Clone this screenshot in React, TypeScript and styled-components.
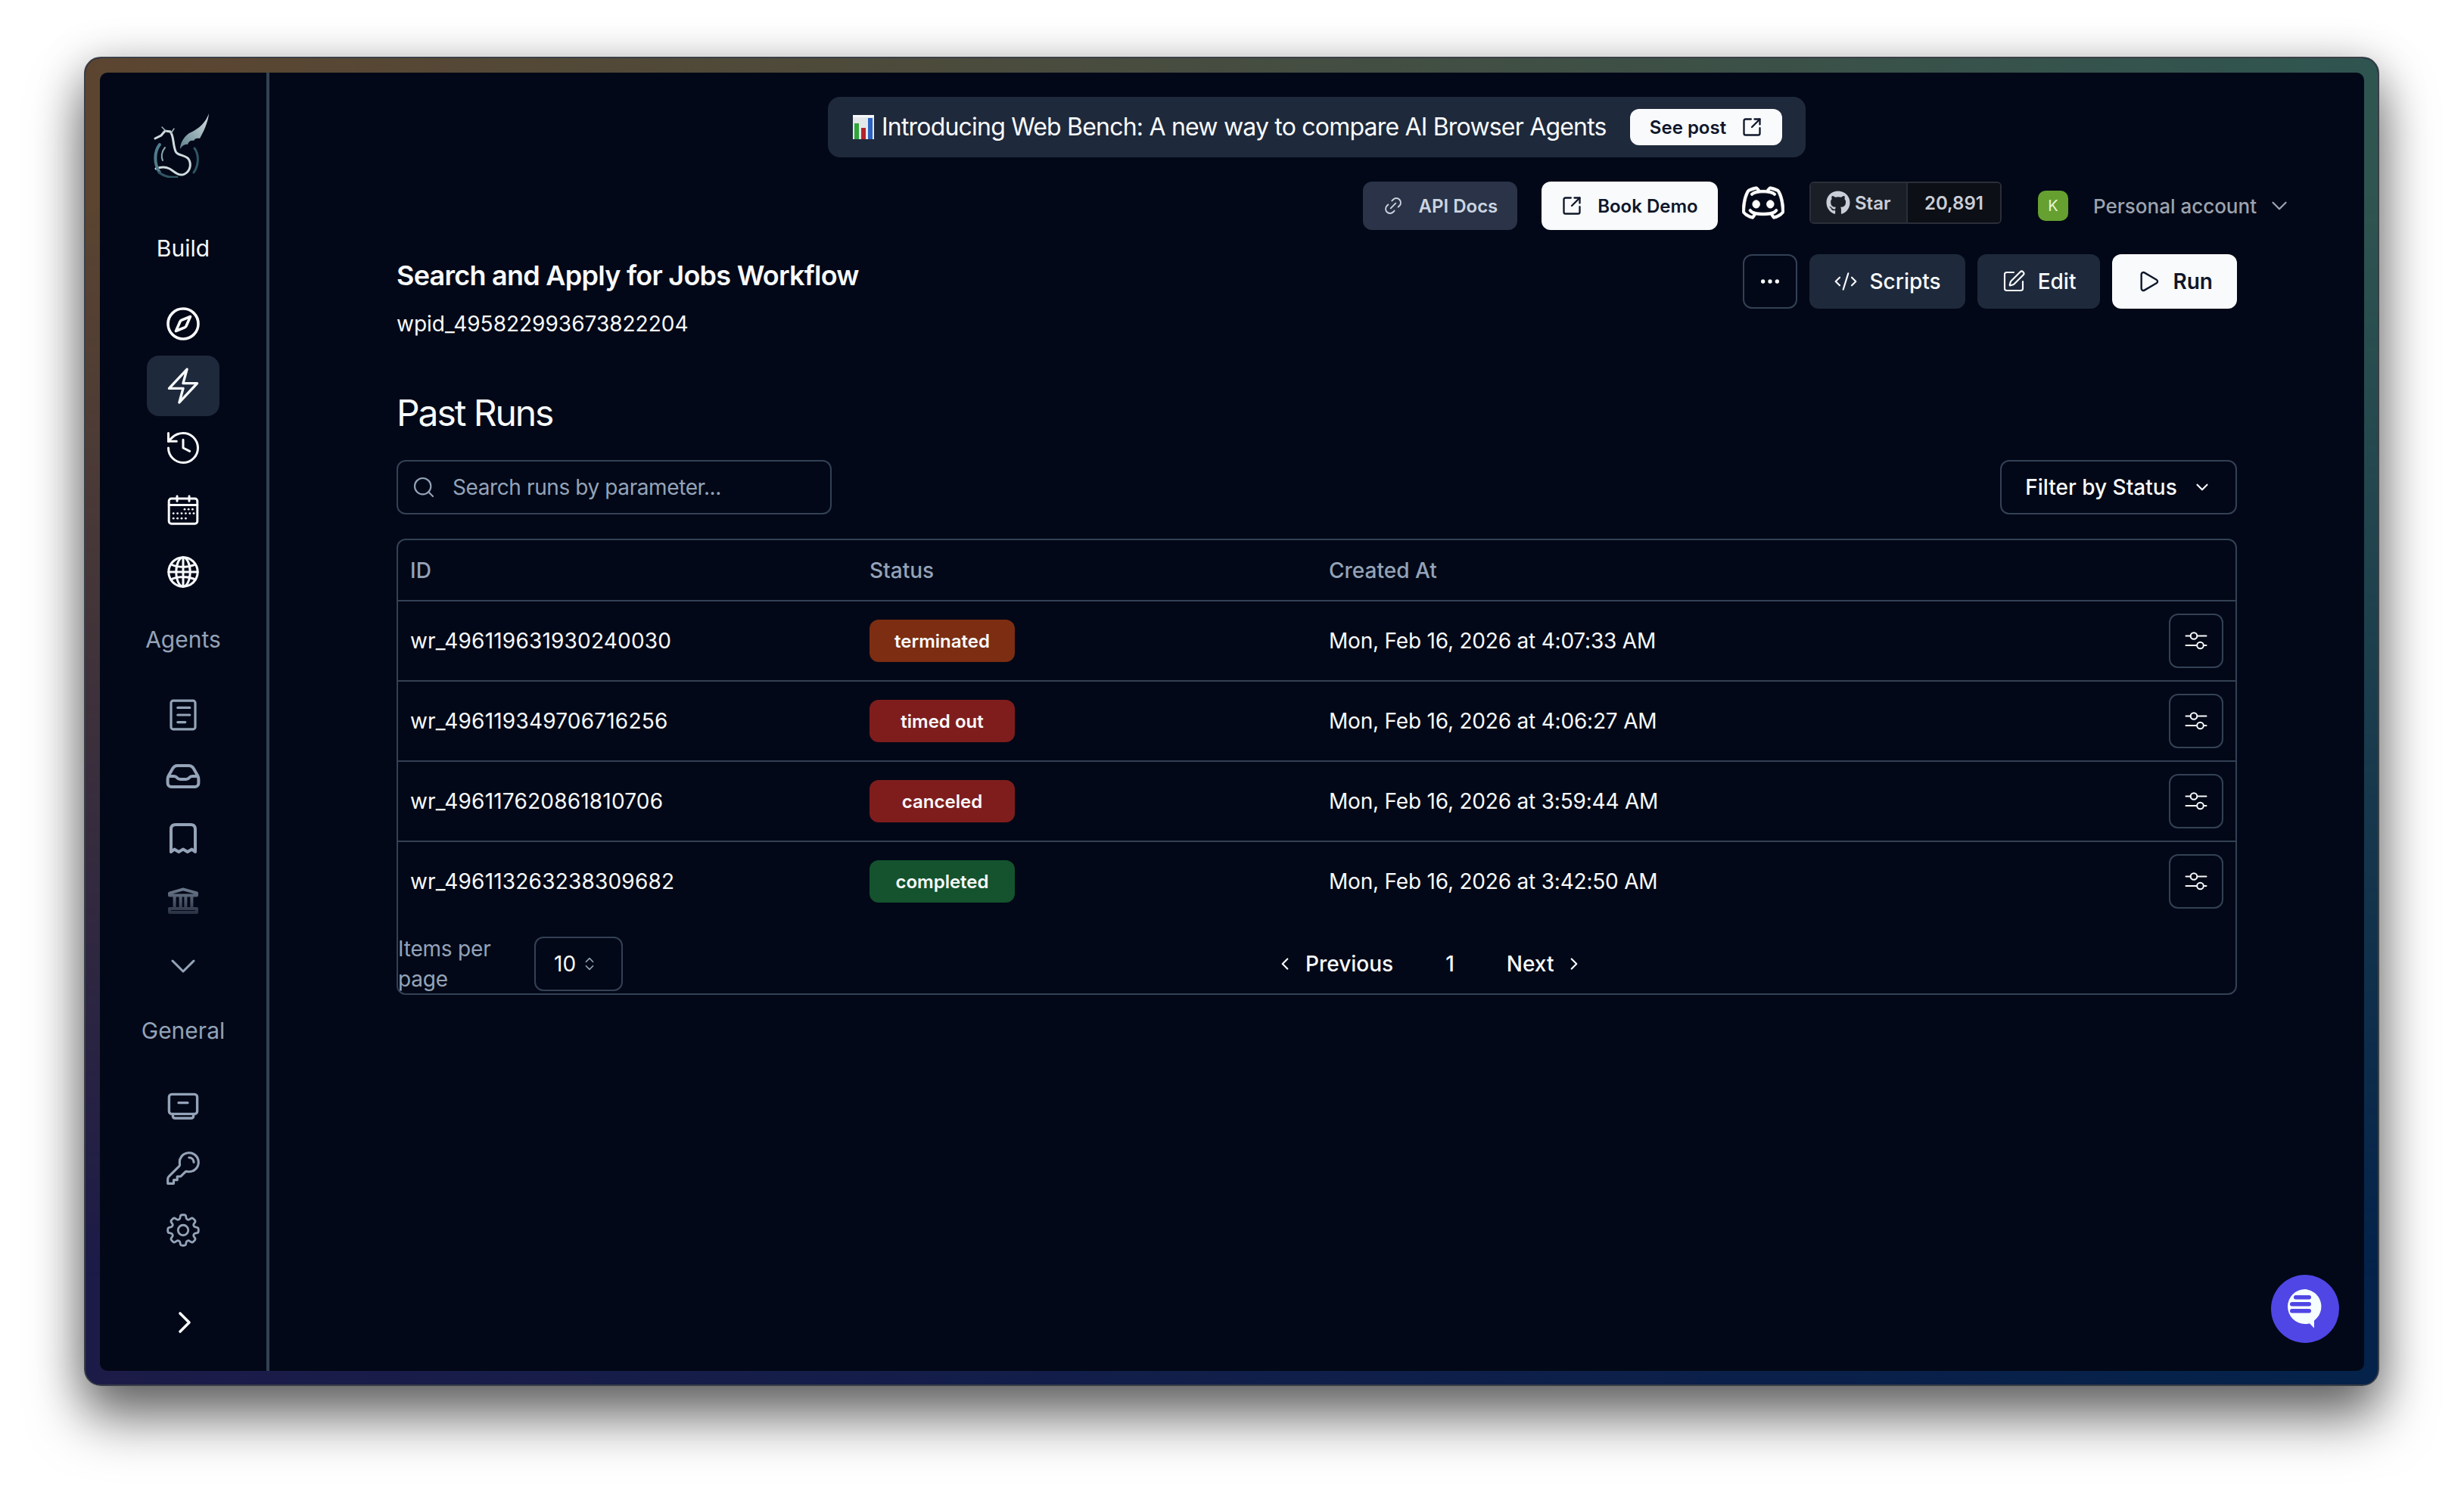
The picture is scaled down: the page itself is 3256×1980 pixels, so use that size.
import React from "react";
import styled, { createGlobalStyle } from "styled-components";
import {
  ChevronDown, ChevronLeft, ChevronRight, ChevronsUpDown, CodeXml, Ellipsis, History, Link2,
  Play, Search, SquareArrowOutUpRight, SquarePen,
} from "lucide-react";
import { HiOutlineBolt, HiOutlineKey, HiOutlineCog8Tooth } from "react-icons/hi2";
import { RxDiscordLogo } from "react-icons/rx";
import { FaGithub } from "react-icons/fa";

const GlobalStyle = createGlobalStyle`
  html, body { margin: 0; padding: 0; background: #ffffff; }
  * { box-sizing: border-box; }
  body { font-family: Inter, "Liberation Sans", sans-serif; -webkit-font-smoothing: antialiased; }
`;

const Page = styled.div`
  width: 3256px;
  height: 1980px;
  padding: 75px 112px 148px 111px;
  background: #fff;
`;

const Frame = styled.div`
  position: relative;
  height: 100%;
  padding: 19px 18px 18px 19px;
  border: 2px solid #3a3f47;
  border-radius: 22px;
  background: linear-gradient(to right, #1c1b48, #04224a);
  box-shadow: 0 44px 70px rgba(0, 0, 0, 0.5), 0 10px 60px rgba(0, 0, 0, 0.28);
  &::before {
    content: "";
    position: absolute;
    inset: 0;
    border-radius: 20px;
    background: linear-gradient(to right, #5c4530, #2f5550);
    -webkit-mask-image: linear-gradient(to bottom, #000 10%, transparent 92%);
    mask-image: linear-gradient(to bottom, #000 10%, transparent 92%);
  }
`;

const Window = styled.div`
  position: relative;
  display: flex;
  height: 100%;
  border-radius: 10px;
  background: #020817;
  color: #f8fafc;
  overflow: hidden;
`;

const Sidebar = styled.aside`
  flex: 0 0 224px;
  display: flex;
  flex-direction: column;
  align-items: center;
  border-right: 4px solid #334155;
`;

const LogoBox = styled.div`
  width: 80px;
  height: 85px;
  margin-top: 54px;
  display: flex;
  justify-content: center;
`;

const NavLabel = styled.div<{ $first?: boolean; $muted?: boolean }>`
  font-size: 30px;
  line-height: 48px;
  margin-top: ${(p) => (p.$first ? "69px" : "25px")};
  margin-bottom: 36px;
  color: ${(p) => (p.$muted ? "#94a3b8" : "#f8fafc")};
`;

const NavList = styled.nav`
  display: flex;
  flex-direction: column;
  gap: 2px;
`;

const NavItem = styled.div<{ $active?: boolean; $muted?: boolean; $fade?: boolean }>`
  width: 96px;
  height: 80px;
  display: flex;
  align-items: center;
  justify-content: center;
  border-radius: 16px;
  background: ${(p) => (p.$active ? "#1e293b" : "transparent")};
  color: ${(p) => (p.$muted ? "#94a3b8" : "#f8fafc")};
  ${(p) =>
    p.$fade
      ? `-webkit-mask-image: linear-gradient(to bottom, rgba(0,0,0,.72) 30%, rgba(0,0,0,.28) 70%);
         mask-image: linear-gradient(to bottom, rgba(0,0,0,.72) 30%, rgba(0,0,0,.28) 70%);`
      : ""}
`;

const NavMore = styled(NavItem)`
  padding-top: 8px;
`;

const CollapseToggle = styled.div`
  margin-top: auto;
  margin-bottom: 40px;
  height: 48px;
  width: 52px;
  display: flex;
  align-items: center;
  justify-content: center;
  padding-left: 4px;
  color: #f8fafc;
`;

const Main = styled.main`
  flex: 1;
  min-width: 0;
  display: flex;
  flex-direction: column;
`;

const Banner = styled.div`
  align-self: center;
  width: 1292px;
  height: 80px;
  margin-top: 32px;
  padding: 0 31px 0 33px;
  display: flex;
  align-items: center;
  justify-content: space-between;
  border-radius: 16px;
  background: #1e293b;
`;

const BannerText = styled.div`
  display: flex;
  align-items: center;
  gap: 10px;
  font-size: 32px;
  line-height: 48px;
  letter-spacing: -0.8px;
  white-space: nowrap;
  color: #f8fafc;
`;

const TopBar = styled.div`
  display: flex;
  align-items: flex-start;
  justify-content: flex-end;
  height: 64px;
  margin-top: 32px;
  padding-right: 95px;
`;

const PillButton = styled.div<{ $light?: boolean; $width: number }>`
  width: ${(p) => p.$width}px;
  height: 64px;
  display: flex;
  align-items: center;
  justify-content: center;
  gap: 20px;
  border-radius: 12px;
  font-size: 24px;
  font-weight: 600;
  white-space: nowrap;
  background: ${(p) => (p.$light ? "#f8fafc" : "#2a3347")};
  color: ${(p) => (p.$light ? "#0f172a" : "#cbd5e1")};
  & + & { margin-left: 32px; }
`;

const SeePost = styled.div`
  width: 201px;
  height: 48px;
  display: flex;
  align-items: center;
  justify-content: center;
  gap: 20px;
  border-radius: 12px;
  background: #f8fafc;
  color: #0f172a;
  font-size: 24px;
  font-weight: 600;
  white-space: nowrap;
`;

const DiscordLink = styled.div`
  margin: 0 33px 0 32px;
  height: 56px;
  width: 56px;
  display: flex;
  align-items: center;
  justify-content: center;
  color: #fff;
  svg path { stroke: currentColor; stroke-width: 0.2px; }
`;

const StarGroup = styled.div`
  display: flex;
  height: 56px;
  border: 2px solid #2a2e38;
  border-radius: 6px;
  color: #c9ced8;
  font-size: 24px;
  font-weight: 600;
`;

const StarLeft = styled.div`
  display: flex;
  align-items: center;
  gap: 6px;
  width: 128px;
  padding-left: 20px;
  background: #1a1e26;
  border-right: 2px solid #2a2e38;
  border-radius: 4px 0 0 4px;
`;

const StarCount = styled.div`
  width: 122px;
  display: flex;
  align-items: center;
  justify-content: center;
  background: #0c0f15;
  border-radius: 0 4px 4px 0;
`;

const Account = styled.div`
  display: flex;
  align-items: center;
  height: 64px;
  margin-left: 48px;
  color: #9ca3af;
  font-size: 26px;
  font-weight: 500;
  white-space: nowrap;
`;

const Avatar = styled.div`
  width: 40px;
  height: 40px;
  display: flex;
  align-items: center;
  justify-content: center;
  border-radius: 10px;
  background: #65a030;
  color: #e8f5d8;
  font-size: 20px;
  font-weight: 400;
  margin-right: 33px;
`;

const AccountChevron = styled(ChevronDown)`
  margin-left: 13px;
`;

const Content = styled.div`
  margin-top: 32px;
  padding: 0 168px;
`;

const HeaderRow = styled.div`
  display: flex;
  justify-content: space-between;
  align-items: flex-start;
`;

const Title = styled.h1`
  margin: 0;
  font-size: 36px;
  line-height: 56px;
  font-weight: 600;
  letter-spacing: -0.75px;
`;

const WorkflowId = styled.div`
  margin-top: 16px;
  font-size: 28px;
  line-height: 40px;
`;

const Actions = styled.div`
  display: flex;
  gap: 16px;
`;

const ActionButton = styled.div<{ $variant?: "ghost" | "solid" | "light" }>`
  height: 72px;
  display: flex;
  align-items: center;
  justify-content: center;
  gap: 16px;
  padding: ${(p) => (p.$variant === "ghost" ? "0" : "0 32px")};
  width: ${(p) => (p.$variant === "ghost" ? "72px" : "auto")};
  border-radius: 12px;
  font-size: 28px;
  border: ${(p) => (p.$variant === "ghost" ? "2px solid #334155" : "none")};
  background: ${(p) => (p.$variant === "light" ? "#f8fafc" : p.$variant === "solid" ? "#1e293b" : "transparent")};
  color: ${(p) => (p.$variant === "light" ? "#0f172a" : "#f8fafc")};
  font-weight: ${(p) => (p.$variant === "light" ? 600 : 500)};
`;

const SectionTitle = styled.h2`
  margin: 66px 0 0;
  font-size: 48px;
  line-height: 64px;
  font-weight: 400;
  letter-spacing: -2.1px;
`;

const FilterRow = styled.div`
  margin-top: 30px;
  display: flex;
  justify-content: space-between;
`;

const SearchBox = styled.div`
  width: 575px;
  height: 72px;
  display: flex;
  align-items: center;
  gap: 22px;
  padding-left: 18px;
  border: 2px solid #334155;
  border-radius: 12px;
  color: #94a3b8;
  font-size: 28px;
  letter-spacing: -0.4px;
`;

const FilterButton = styled.div`
  width: 313px;
  height: 72px;
  display: flex;
  align-items: center;
  justify-content: center;
  gap: 20px;
  border: 2px solid #334155;
  border-radius: 12px;
  font-size: 28px;
  font-weight: 500;
`;

const Table = styled.div`
  margin-top: 32px;
  border: 2px solid #334155;
  border-radius: 12px;
`;

const Columns = `
  display: grid;
  grid-template-columns: 607px 607px 1fr 88px;
  align-items: center;
`;

const HeaderCells = styled.div`
  ${Columns}
  height: 81px;
  border-bottom: 2px solid #334155;
  color: #94a3b8;
  font-size: 28px;
  font-weight: 500;
`;

const Row = styled.div<{ $last?: boolean }>`
  ${Columns}
  height: ${(p) => (p.$last ? "104px" : "106px")};
  border-bottom: ${(p) => (p.$last ? "none" : "2px solid #334155")};
  font-size: 28px;
`;

const Cell = styled.div`
  padding-left: 16px;
  white-space: nowrap;
`;

const RunId = styled(Cell)`
  letter-spacing: 0.2px;
`;

const CreatedCell = styled(Cell)`
  letter-spacing: -0.2px;
`;

const Badge = styled.div<{ $color: string }>`
  width: 192px;
  height: 56px;
  display: flex;
  align-items: center;
  justify-content: center;
  border-radius: 12px;
  background: ${(p) => p.$color};
  color: #f8fafc;
  font-size: 24px;
  font-weight: 600;
`;

const IconButton = styled.div`
  width: 72px;
  height: 72px;
  display: flex;
  align-items: center;
  justify-content: center;
  border: 2px solid #334155;
  border-radius: 12px;
`;

const Footer = styled.div`
  height: 96px;
  padding-top: 18px;
  display: flex;
  align-items: center;
`;

const PerPageLabel = styled.div`
  width: 160px;
  font-size: 28px;
  line-height: 40px;
  letter-spacing: -0.2px;
  color: #94a3b8;
`;

const PageSelect = styled.div`
  width: 117px;
  height: 72px;
  margin-left: 20px;
  display: flex;
  align-items: center;
  gap: 7px;
  padding-left: 24px;
  border: 2px solid #334155;
  border-radius: 12px;
  font-size: 28px;
  color: #f8fafc;
  svg { color: #94a3b8; }
`;

const Pagination = styled.div`
  margin-left: 862px;
  display: flex;
  align-items: center;
  font-size: 28px;
  font-weight: 500;
`;

const PageLink = styled.div`
  display: flex;
  align-items: center;
  gap: 14px;
`;

const PageNumber = styled.div`
  margin: 0 69px;
`;

const ChatBubble = styled.div`
  position: absolute;
  right: 33px;
  bottom: 37px;
  width: 90px;
  height: 90px;
  display: flex;
  align-items: center;
  justify-content: center;
  border-radius: 50%;
  background: #4f46e5;
`;

const s = 1.5;
const iconProps = { width: 48, height: 48, viewBox: "0 0 24 24", fill: "none", stroke: "currentColor", strokeWidth: s, strokeLinecap: "round" as const, strokeLinejoin: "round" as const };

const DragonLogo = () => (
  <svg width="80" height="85" viewBox="0 0 80 85" fill="none" strokeLinecap="round" style={{ filter: "blur(0.5px)" }}>
    <defs>
      <linearGradient id="wing" x1="0" y1="1" x2="1" y2="0">
        <stop offset="0" stopColor="#5f828e" />
        <stop offset="1" stopColor="#d5e0e1" />
      </linearGradient>
    </defs>
    <path d="M74 0 C70 12 60 21 48 26 C42 30 36 38 36 47 C39 42 43 40 46 41 C47 37 50 35 54 36 C55 33 59 32 62 33 C66 26 73 12 74 0Z" fill="url(#wing)" />
    <path d="M3 33 L11 29 L16 23 L23 24 C28 30 26 40 30 50 C32 56 42 54 47 60 C51 66 50 76 42 80 C34 84 28 76 22 73 C16 70 9 71 4 73" stroke="#cfdcdf" strokeWidth="3" />
    <path d="M18 24 L12 18 M24 26 L28 20" stroke="#9fb7be" strokeWidth="1.500" />
    <path d="M9 41 C2 50 1 66 9 78" stroke="#517c8c" strokeWidth="4" />
    <path d="M16 45 C11 51 11 58 13 62" stroke="#88a7b2" strokeWidth="2" />
    <path d="M55 46 C61 54 61 68 54 78" stroke="#2f5663" strokeWidth="3" />
    <path d="M8 78 C16 84 24 85 32 84" stroke="#2f5663" strokeWidth="3" />
  </svg>
);

const CompassIcon = () => (
  <svg width="48" height="48" viewBox="0 0 48 48" fill="none" stroke="currentColor" strokeWidth="3.6" strokeLinejoin="round">
    <circle cx="24" cy="24" r="20" />
    <path d="M33.500 14.500 L28 27 C27.600 27.800 27 28.400 26 28.800 L14.500 33.500 L20 21 C20.400 20.200 21 19.600 22 19.200 Z" />
  </svg>
);

const CalendarIcon = () => (
  <svg {...iconProps}>
    <rect x="2.600" y="4.500" width="18.800" height="16.600" rx="1.600" />
    <path d="M2.600 8.800h18.800M8 2.900v3.200M16 2.900v3.200" />
    <g fill="currentColor" stroke="none">
      {[[13, 11.6], [15.6, 11.6], [18.2, 11.6], [5.6, 14.3], [8.3, 14.3], [11, 14.3], [13.7, 14.3], [16.4, 14.3], [19, 14.3], [5.6, 17.6], [8.3, 17.6], [11, 17.6], [13.7, 17.6]].map(([cx, cy], i) => (
        <circle key={i} cx={cx} cy={cy} r="0.7" />
      ))}
    </g>
  </svg>
);

const GlobeIcon = () => (
  <svg {...iconProps}>
    <circle cx="12" cy="12" r="9.600" />
    <ellipse cx="12" cy="12" rx="4.600" ry="9.600" />
    <path d="M12 2.400v19.200M2.400 12h19.200M4 7c2.400 1.200 5 1.700 8 1.700s5.600-.5 8-1.700M4 17c2.400-1.200 5-1.700 8-1.700s5.600.5 8 1.700" />
  </svg>
);

const DocIcon = () => (
  <svg {...iconProps} strokeWidth="1.6">
    <rect x="4" y="2.600" width="16" height="18.800" rx="1.400" />
    <path d="M8.400 7.200h8M8.400 12h8M8.400 16.800h5" />
  </svg>
);

const InboxIcon = () => (
  <svg {...iconProps} strokeWidth="2">
    <path d="M1.800 13.500c0-1 .2-1.700.6-2.400l2.700-4.700C5.800 5.200 6.800 4.500 8 4.500h8c1.200 0 2.200.7 2.900 1.900l2.700 4.700c.4.700.6 1.400.6 2.400v2.500c0 1.500-1.100 2.500-2.500 2.500H4.300c-1.400 0-2.500-1-2.500-2.500Z" />
    <path d="M2.400 11.500H6c.9 0 1.500.4 2 1 .5.6 1.200 1 2 1h4c.8 0 1.500-.4 2-1 .5-.6 1.100-1 2-1h3.600" />
  </svg>
);

const ReceiptIcon = () => (
  <svg {...iconProps} strokeWidth="2">
    <path d="M4 20.500V5.500C4 3.500 5.200 2.500 7 2.500h10c1.800 0 3 1 3 3v15l-2.200-1.700-2.900 1.700-2.900-1.700-2.900 1.700-2.900-1.700Z" />
  </svg>
);

const BankIcon = () => (
  <svg {...iconProps} strokeWidth="2">
    <path d="M3 8.300V6.800L12 4.200l9 2.500v1.600ZM6.300 8.500v8M10.300 8.500v8M13.700 8.500v8M17.700 8.500v8M3 17h18v2.500H3Z" />
  </svg>
);

const CardMinusIcon = () => (
  <svg {...iconProps} strokeWidth="1.7">
    <rect x="2.700" y="4.200" width="18.600" height="13" rx="1.800" />
    <path d="M9 9.800h6M5.200 17.200v1.300c0 .9.600 1.500 1.500 1.500h10.600c.9 0 1.500-.6 1.500-1.500v-1.300" />
  </svg>
);

const SlidersIcon = () => (
  <svg width="30" height="26" viewBox="0 0 30 26" fill="none" stroke="#f8fafc" strokeWidth="2" strokeLinecap="round">
    <path d="M1.500 6.500h6M17 6.500h11.500M1.500 19h14M25 19h3.500" />
    <circle cx="12" cy="6.500" r="4.300" />
    <circle cx="20.500" cy="19" r="4.300" />
  </svg>
);

const ChartEmoji = () => (
  <svg width="28" height="32" viewBox="0 0 28 32">
    <rect width="28" height="32" fill="#e4e7ea" />
    <rect x="0" y="0" width="28" height="3" fill="#f6f7f8" />
    <rect x="2" y="11" width="6" height="21" fill="#2fa53a" />
    <rect x="11" y="17" width="6" height="15" fill="#b5232b" />
    <rect x="20" y="4" width="6" height="28" fill="#2b62c4" />
  </svg>
);

const ChatIcon = () => (
  <svg width="48" height="54" viewBox="0 0 48 54">
    <path d="M24 1a23 23 0 1 0 0 46c2 0 4-.2 6-.7L36 52.500V42.500A23 23 0 0 0 24 1Z" fill="#f6fdff" />
    <g fill="#4f46e5">
      <rect x="9" y="9" width="23" height="5.500" rx="2.700" />
      <rect x="4" y="18" width="28" height="5.500" rx="2.700" />
      <rect x="4" y="27" width="28" height="5.500" rx="2.700" />
    </g>
  </svg>
);

type RunRow = { id: string; status: string; color: string; created: string };

const runs: RunRow[] = [
  { id: "wr_496119631930240030", status: "terminated", color: "#7c2d12", created: "Mon, Feb 16, 2026 at 4:07:33 AM" },
  { id: "wr_496119349706716256", status: "timed out", color: "#7f1d1d", created: "Mon, Feb 16, 2026 at 4:06:27 AM" },
  { id: "wr_496117620861810706", status: "canceled", color: "#7f1d1d", created: "Mon, Feb 16, 2026 at 3:59:44 AM" },
  { id: "wr_496113263238309682", status: "completed", color: "#14532d", created: "Mon, Feb 16, 2026 at 3:42:50 AM" },
];

export default function App() {
  return (
    <Page>
      <GlobalStyle />
      <Frame>
        <Window>
          <Sidebar>
            <LogoBox><DragonLogo /></LogoBox>
            <NavLabel $first>Build</NavLabel>
            <NavList>
              <NavItem><CompassIcon /></NavItem>
              <NavItem $active><HiOutlineBolt size={54} /></NavItem>
              <NavItem><History size={52} strokeWidth={1.4} /></NavItem>
              <NavItem><CalendarIcon /></NavItem>
              <NavItem><GlobeIcon /></NavItem>
            </NavList>
            <NavLabel $muted>Agents</NavLabel>
            <NavList>
              <NavItem $muted><DocIcon /></NavItem>
              <NavItem $muted><InboxIcon /></NavItem>
              <NavItem $muted><ReceiptIcon /></NavItem>
              <NavItem $muted $fade><BankIcon /></NavItem>
              <NavMore $muted><ChevronDown size={56} strokeWidth={1.3} /></NavMore>
            </NavList>
            <NavLabel $muted>General</NavLabel>
            <NavList>
              <NavItem $muted><CardMinusIcon /></NavItem>
              <NavItem $muted><HiOutlineKey size={50} /></NavItem>
              <NavItem $muted><HiOutlineCog8Tooth size={54} strokeWidth={1.25} /></NavItem>
            </NavList>
            <CollapseToggle><ChevronRight size={48} strokeWidth={1.8} /></CollapseToggle>
          </Sidebar>
          <Main>
            <Banner>
              <BannerText><ChartEmoji />Introducing Web Bench: A new way to compare AI Browser Agents</BannerText>
              <SeePost>See post<SquareArrowOutUpRight size={28} strokeWidth={2} /></SeePost>
            </Banner>
            <TopBar>
              <PillButton $width={204}><Link2 size={28} strokeWidth={1.6} transform="rotate(-45)" />API Docs</PillButton>
              <PillButton $light $width={233}><SquareArrowOutUpRight size={28} strokeWidth={2} />Book Demo</PillButton>
              <DiscordLink><RxDiscordLogo size={60} /></DiscordLink>
              <StarGroup>
                <StarLeft><FaGithub size={32} />Star</StarLeft>
                <StarCount>20,891</StarCount>
              </StarGroup>
              <Account>
                <Avatar>K</Avatar>
                Personal account
                <AccountChevron size={34} strokeWidth={1.6} />
              </Account>
            </TopBar>
            <Content>
              <HeaderRow>
                <div>
                  <Title>Search and Apply for Jobs Workflow</Title>
                  <WorkflowId>wpid_495822993673822204</WorkflowId>
                </div>
                <Actions>
                  <ActionButton $variant="ghost"><Ellipsis size={32} strokeWidth={2} /></ActionButton>
                  <ActionButton $variant="solid"><CodeXml size={32} strokeWidth={1.6} />Scripts</ActionButton>
                  <ActionButton $variant="solid"><SquarePen size={32} strokeWidth={1.6} />Edit</ActionButton>
                  <ActionButton $variant="light"><Play size={32} strokeWidth={1.8} />Run</ActionButton>
                </Actions>
              </HeaderRow>
              <SectionTitle>Past Runs</SectionTitle>
              <FilterRow>
                <SearchBox><Search size={32} strokeWidth={1.6} />Search runs by parameter...</SearchBox>
                <FilterButton>Filter by Status<ChevronDown size={26} strokeWidth={2} /></FilterButton>
              </FilterRow>
              <Table>
                <HeaderCells>
                  <Cell>ID</Cell>
                  <Cell>Status</Cell>
                  <Cell>Created At</Cell>
                  <div />
                </HeaderCells>
                {runs.map((run, i) => (
                  <Row key={run.id} $last={i === runs.length - 1}>
                    <RunId>{run.id}</RunId>
                    <Cell><Badge $color={run.color}>{run.status}</Badge></Cell>
                    <CreatedCell>{run.created}</CreatedCell>
                    <IconButton><SlidersIcon /></IconButton>
                  </Row>
                ))}
                <Footer>
                  <PerPageLabel>Items per page</PerPageLabel>
                  <PageSelect>10<ChevronsUpDown size={22} strokeWidth={1.8} /></PageSelect>
                  <Pagination>
                    <PageLink><ChevronLeft size={26} strokeWidth={2} />Previous</PageLink>
                    <PageNumber>1</PageNumber>
                    <PageLink>Next<ChevronRight size={26} strokeWidth={2} /></PageLink>
                  </Pagination>
                </Footer>
              </Table>
            </Content>
          </Main>
          <ChatBubble><ChatIcon /></ChatBubble>
        </Window>
      </Frame>
    </Page>
  );
}
